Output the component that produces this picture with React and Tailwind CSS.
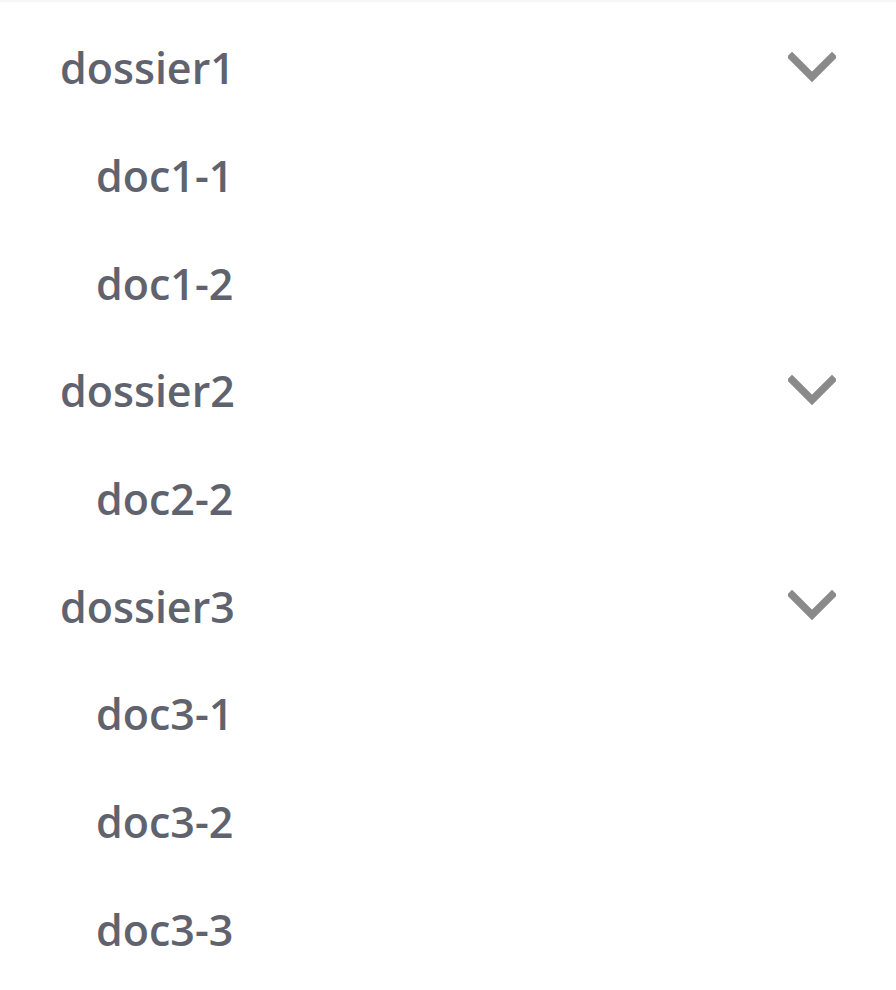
const dossiers = [
  { name: 'dossier1', docs: ['doc1-1', 'doc1-2'] },
  { name: 'dossier2', docs: ['doc2-2'] },
  { name: 'dossier3', docs: ['doc3-1', 'doc3-2', 'doc3-3'] },
];

function Chevron() {
  return (
    <svg className="w-[48px] h-[32px]" viewBox="0 0 48 32" fill="none" stroke="#8a8a8a" strokeWidth={7.5} strokeLinecap="square">
      <path d="M4 6l20 20L44 6" />
    </svg>
  );
}

export default function App() {
  return (
    <div className="w-[896px] h-[990px] bg-white border-t-2 border-[#f6f6f6] pt-[14px] text-[#60636d] font-['Open_Sans',sans-serif] font-semibold text-[43px] leading-none">
      {dossiers.map((d) => (
        <div key={d.name}>
          {/* dossier */}
          <div className="h-[107.67px] flex items-center justify-between pl-[60px] pr-[60px]">
            <span className="-mt-[4px]">{d.name}</span>
            <span className="-mt-[6px]"><Chevron /></span>
          </div>
          {d.docs.map((doc) => (
            <div key={doc} className="h-[107.67px] flex items-center pl-[96px]">
              <span className="-mt-[4px]">{doc}</span>
            </div>
          ))}
        </div>
      ))}
    </div>
  );
}
